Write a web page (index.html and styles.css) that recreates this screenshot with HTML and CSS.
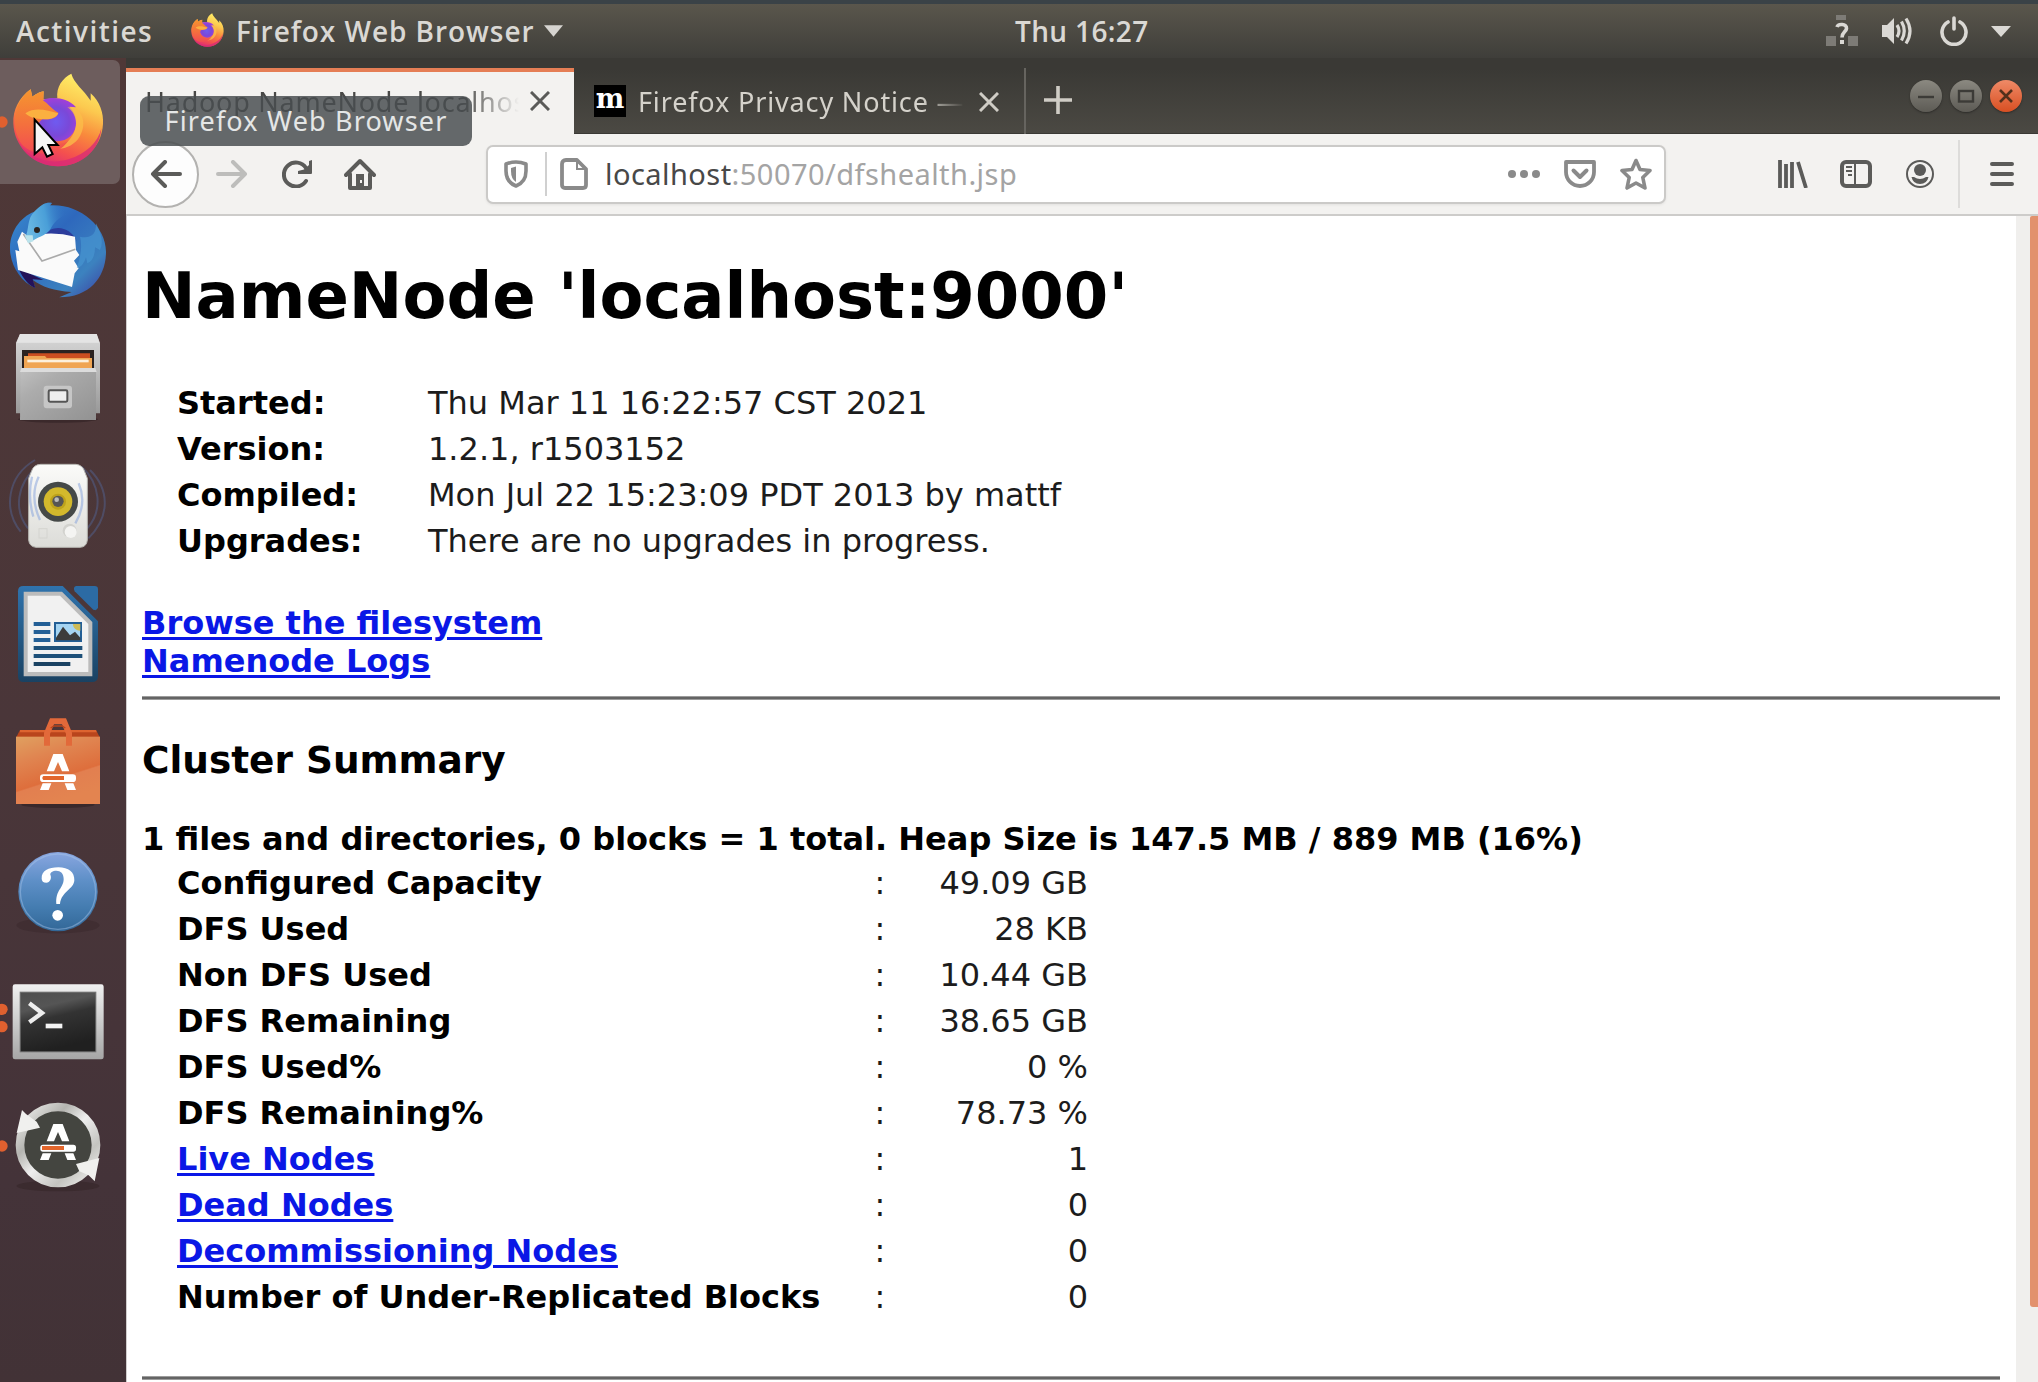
FILE: index.html
```html
<!DOCTYPE html>
<html lang="en">
<head>
<meta charset="utf-8">
<title>Hadoop NameNode localhost:9000</title>
<link rel="stylesheet" href="styles.css">
</head>
<body>
<svg class="defs" width="0" height="0" aria-hidden="true">
  <defs>
    <linearGradient id="fxBody" x1=".75" y1="0" x2=".35" y2="1"><stop offset="0" stop-color="#fff36b"/><stop offset=".3" stop-color="#fcc94f"/><stop offset=".55" stop-color="#f98a3c"/><stop offset=".8" stop-color="#f4504e"/><stop offset="1" stop-color="#dd2a78"/></linearGradient>
    <radialGradient id="fxGlobe" cx=".5" cy=".55" r=".55"><stop offset="0" stop-color="#6f5bf0"/><stop offset=".6" stop-color="#7a48d8"/><stop offset="1" stop-color="#a040d8"/></radialGradient>
    <linearGradient id="fxHead" x1="0" y1="0" x2="0" y2="1"><stop offset="0" stop-color="#f5962f"/><stop offset=".55" stop-color="#f4703d"/><stop offset="1" stop-color="#f24c52"/></linearGradient>
    <symbol id="firefox" viewBox="38 68 274 284">
      <path fill="url(#fxBody)" d="M172 145C168 110 188 84 214 71C222 100 250 118 272 152L272 130C300 155 311 190 309 222C305 295 245 349 174 349C100 349 42 290 40 220C39 180 55 145 92 118L97 140C108 134 112 128 131 124L130 148Z"/>
      <path fill="#d92c74" opacity=".8" d="M50 262C75 328 150 345 205 328C260 312 295 275 304 235C300 300 245 349 174 349C118 349 68 315 50 262Z"/>
      <path fill="url(#fxGlobe)" d="M128 150C160 138 205 145 228 172L208 170C234 195 236 235 212 258C185 284 135 277 118 240C100 205 105 170 128 150Z"/>
      <path fill="#fbbf4a" opacity=".75" d="M202 172C248 172 262 220 240 258C226 284 195 298 172 296C205 282 228 250 228 220C228 200 218 182 202 172Z"/>
      <path fill="url(#fxHead)" d="M92 118L97 140C108 134 112 128 131 124L130 152C142 158 158 180 175 188C172 205 148 210 128 207C108 218 110 245 125 262C145 286 185 287 205 272C170 325 90 320 60 275C30 225 45 150 92 118Z"/>
      <path fill="#fbb040" d="M76 190C105 170 140 180 175 190C168 206 145 210 122 207C102 206 90 202 76 190Z"/>
    </symbol>
    <linearGradient id="tbBlue" x1="0" y1="0" x2="1" y2="1"><stop offset="0" stop-color="#3a8fd0"/><stop offset=".4" stop-color="#2e68bd"/><stop offset=".75" stop-color="#3c82bf"/><stop offset="1" stop-color="#3d3aa0"/></linearGradient>
    <linearGradient id="tbHead" x1="0" y1=".6" x2="1" y2=".4"><stop offset="0" stop-color="#6dbbe4"/><stop offset=".5" stop-color="#4a9fd8"/><stop offset="1" stop-color="#2f6bbf" stop-opacity="0"/></linearGradient>
    <linearGradient id="grey" x1="0" y1="0" x2="0" y2="1"><stop offset="0" stop-color="#d8d8d8"/><stop offset="1" stop-color="#999"/></linearGradient>
    <linearGradient id="drawer" x1="0" y1="0" x2="1" y2="1"><stop offset="0" stop-color="#c0c0c0"/><stop offset=".3" stop-color="#acacac"/><stop offset="1" stop-color="#929292"/></linearGradient>
    <linearGradient id="white" x1="0" y1="0" x2="0" y2="1"><stop offset="0" stop-color="#fbfbf9"/><stop offset="1" stop-color="#dcdcd8"/></linearGradient>
    <linearGradient id="writer" x1="0" y1="0" x2="0" y2="1"><stop offset="0" stop-color="#2f73ad"/><stop offset="1" stop-color="#1a4262"/></linearGradient>
    <linearGradient id="bag" x1="0" y1="0" x2=".4" y2="1"><stop offset="0" stop-color="#e0a060"/><stop offset=".35" stop-color="#e08450"/><stop offset=".7" stop-color="#de6e3c"/><stop offset=".72" stop-color="#e27f50"/><stop offset="1" stop-color="#e38450"/></linearGradient>
    <linearGradient id="help" x1="0" y1="0" x2="0" y2="1"><stop offset="0" stop-color="#89a6e0"/><stop offset=".35" stop-color="#5f90c8"/><stop offset=".7" stop-color="#447cb0"/><stop offset="1" stop-color="#326797"/></linearGradient>
    <linearGradient id="term" x1="0" y1="0" x2=".3" y2="1"><stop offset="0" stop-color="#4e4e4e"/><stop offset=".3" stop-color="#555"/><stop offset=".5" stop-color="#333"/><stop offset="1" stop-color="#202020"/></linearGradient>
    <linearGradient id="frame" x1="0" y1="0" x2="0" y2="1"><stop offset="0" stop-color="#f0f0f0"/><stop offset=".5" stop-color="#ccc"/><stop offset="1" stop-color="#a6a6a6"/></linearGradient>
    <linearGradient id="ring" x1="0" y1="0" x2="1" y2="1"><stop offset="0" stop-color="#f2f2f0"/><stop offset=".3" stop-color="#b4b4b0"/><stop offset=".5" stop-color="#eee"/><stop offset=".75" stop-color="#c4c4c0"/><stop offset="1" stop-color="#f4f4f2"/></linearGradient>
  </defs>
</svg>

<header class="panel">
  <span class="panel-activities">Activities</span>
  <svg class="panel-fx" width="33" height="38"><use href="#firefox" width="33" height="38"/></svg>
  <span class="panel-app">Firefox Web Browser</span>
  <svg class="panel-caret" width="19" height="12" viewBox="0 0 20 12"><path fill="#d6d4d0" d="M0 0H20L10 12Z"/></svg>
  <span class="panel-clock">Thu 16:27</span>
  <div class="panel-status">
    <svg class="network" width="32" height="32" viewBox="0 0 32 32"><path fill="#7d7b76" d="M10 0h10v5H10zM0 21h10v10H0zM22 21h10v10H22z"/><path fill="none" stroke="#dad8d4" stroke-width="3.600" d="M11 12C12 8.500 21 8.500 20.500 13.500C20.200 17 16 17 16 22.500"/><rect x="14" y="25" width="4" height="4" fill="#dad8d4"/></svg>
    <svg class="volume" width="32" height="28" viewBox="0 0 32 28"><path fill="#dad8d4" d="M0 8H5L12 1V27L5 20H0Z"/><path fill="none" stroke="#dad8d4" stroke-width="3.200" d="M15 8Q19 14 15 20M19.500 4.500Q25 14 19.500 23.500M24 1.500Q32 14 24 26.500"/></svg>
    <svg class="power" width="28" height="30" viewBox="0 0 28 30"><path fill="none" stroke="#dad8d4" stroke-width="3.600" stroke-linecap="round" d="M8 6A12 12 0 1 0 20 6M14 2V13"/></svg>
    <svg width="20" height="11" viewBox="0 0 20 11"><path fill="#dad8d4" d="M0 0H20L10 11Z"/></svg>
  </div>
</header>

<div class="desktop">
  <nav class="dock">
    <div class="dock-item active">
      <svg class="icon" viewBox="0 24 378 384">
        <circle cx="6" cy="216" r="17" fill="#e0602f"/>
        <use href="#firefox" x="38" y="68" width="274" height="284"/>
        <path d="M104 209V312L127 292L141 320L158 312L145 285H173Z" fill="#f6f6f6" stroke="#000" stroke-width="6"/>
      </svg>
    </div>
    <div class="dock-item">
      <svg class="icon" viewBox="0 408 378 384">
        <path fill="url(#tbBlue)" d="M112 482C125 462 140 456 156 459L150 466C235 460 318 525 318 605C318 680 270 742 178 742L215 726C160 722 130 712 98 690L106 714C60 695 28 640 30 590C32 540 65 495 112 482Z"/>
        <path fill="#241259" d="M55 655C70 690 90 708 106 714L98 688L130 690Z"/>
        <path fill="#2c3c9c" d="M125 555C165 520 210 530 232 575L225 565C200 552 160 550 125 555Z"/>
        <path fill="#fafafa" d="M66 545L86 560L118 553Q170 546 225 560L228 600L238 615L222 632L236 655L224 670L216 711L54 660L46 600L58 604L52 575Z"/>
        <path fill="none" stroke="#aaa" stroke-width="5" d="M70 552L126 633L226 598"/>
        <path fill="url(#tbHead)" d="M76 562C88 540 80 506 104 484C124 462 140 456 156 459L150 467C185 468 200 480 205 492C175 500 160 520 150 540C135 558 110 562 96 574Z"/>
        <path fill="#b9e3ec" d="M74 556L98 556L100 574L84 580Z"/>
        <circle cx="111" cy="540" r="9" fill="#2a2420"/>
        <path fill="#4a9ad4" opacity=".6" d="M240 560Q290 570 288 520Q315 570 300 600L285 592Q285 630 262 640L258 622Q250 650 230 655Q250 600 240 560Z"/>
      </svg>
    </div>
    <div class="dock-item">
      <svg class="icon" viewBox="0 12 378 384">
        <ellipse cx="174" cy="328" rx="120" ry="10" fill="#2a1c1e" opacity=".5"/>
        <path fill="url(#grey)" d="M60 72H290L300 98V310H48V98Z"/>
        <path fill="#e4e4e4" d="M60 72H290L298 98H50Z"/>
        <rect x="66" y="120" width="216" height="62" fill="#2b2220"/>
        <path fill="#cc4e20" d="M84 130H270V160H84Z"/><path fill="#f0a553" d="M72 138H135L140 144H276V182H72Z"/>
        <rect x="82" y="149" width="184" height="8" fill="#fdf0dc"/>
        <path fill="url(#drawer)" d="M62 178H288V330H60Z"/><path fill="#dcdcdc" d="M64 174H286L290 186H60Z"/>
        <rect x="131" y="227" width="85" height="68" rx="9" fill="#c6c6c6"/>
        <rect x="146" y="241" width="56" height="34" rx="4" fill="#eee" stroke="#555" stroke-width="6"/>
      </svg>
    </div>
    <div class="dock-item">
      <svg class="icon" viewBox="0 396 378 384">
        <g fill="none" stroke="#52618f" stroke-width="6" opacity=".5"><path d="M105 450C20 500 10 600 62 665M112 470C50 520 40 600 84 655M245 470C300 520 310 600 262 655M270 480C330 540 330 620 265 685"/></g>
        <path fill="url(#white)" stroke="#b7b7b2" stroke-width="3" d="M122 463H228Q248 465 254 485L262 505V690Q260 711 240 712H108Q88 710 86 690V505L94 485Q100 464 122 463Z"/>
        <path fill="none" stroke="#8aa5dd" stroke-width="7" opacity=".55" d="M96 500Q82 560 100 620M116 500Q88 560 120 630M236 520Q262 580 226 640"/>
        <circle cx="174" cy="575" r="60" fill="#454948"/><circle cx="174" cy="575" r="43" fill="#d3b92c"/><circle cx="174" cy="575" r="24" fill="#bda21c"/><circle cx="174" cy="574" r="17" fill="#555"/><circle cx="170" cy="569" r="7" fill="#bbb"/>
        <circle cx="209" cy="662" r="21" fill="#d2d2ce"/><circle cx="212" cy="666" r="18" fill="#f4f4f2"/>
        <rect x="117" y="656" width="24" height="28" fill="none" stroke="#d4d4d0" stroke-width="3"/>
      </svg>
    </div>
    <div class="dock-item">
      <svg class="icon" viewBox="0 0 378 384">
        <path fill="url(#writer)" d="M70 48H188L294 154V318Q294 336 276 336H70Q54 336 54 318V64Q54 48 70 48Z"/>
        <path fill="#2c6ba4" d="M228 48H284Q294 48 294 58V112Q292 124 280 119L224 64Q218 52 228 48Z"/>
        <path fill="#bcbcbc" d="M71 65H186L277 156V319H71Z"/>
        <path fill="#f1f1f1" d="M83 77H180L265 162V306H83Z"/>
        <path fill="#235f96" d="M101 156H151V168H101zM101 180H151V192H101zM101 204H151V216H101z"/>
        <path fill="#1d5079" d="M101 228H247V240H101zM101 252H247V264H101z"/><path fill="#1a4262" d="M101 276H211V288H101z"/>
        <rect x="165" y="159" width="78" height="54" fill="#a5d4f2" stroke="#235f96" stroke-width="6"/>
        <path fill="#cdbb57" d="M219 162H241V182C228 182 219 174 219 162Z"/>
        <path fill="#3c3c3c" d="M168 203L189 170L210 196L225 185L241 203V211H168Z"/>
      </svg>
    </div>
    <div class="dock-item">
      <svg class="icon" viewBox="0 384 378 384">
        <ellipse cx="174" cy="704" rx="110" ry="10" fill="#2a1c1e" opacity=".5"/>
        <path fill="#b9451c" d="M60 480H288L300 503H48Z"/><path fill="#dd6430" d="M60 480H288L290 487H60Z"/>
        <rect x="48" y="500" width="252" height="202" fill="url(#bag)"/>
        <path fill="none" stroke="#e2693a" stroke-width="18" d="M141 527V490L156 454H192L207 490V527"/>
        <path fill="none" stroke="#b9451c" stroke-width="4" d="M152 474L162 468H186L196 474"/>
        <path fill="#fff" d="M160 552H188L208 604H186L174 576L162 604H140ZM128 640H154L146 660H120ZM194 640H220L228 660H202Z"/>
        <rect x="120" y="613" width="108" height="23" rx="10" fill="#fff"/><path fill="#e2662c" d="M130 618H192V630H130Q124 624 130 618Z"/>
      </svg>
    </div>
    <div class="dock-item">
      <svg class="icon" viewBox="0 -12 378 384">
        <ellipse cx="174" cy="286" rx="125" ry="24" fill="#2a1c1e" opacity=".25"/>
        <circle cx="174" cy="185" r="119" fill="url(#help)"/><circle cx="174" cy="185" r="113" fill="none" stroke="#a8c6ea" stroke-width="4" opacity=".45"/>
        <path fill="#fff" d="M125 146C124 122 145 112 175 112C206 112 224 127 223 151C222 178 184 184 180 222H169C166 180 190 176 191 148C191 130 182 122 169 122C158 122 150 127 151 134C156 144 150 158 139 158C130 158 125 153 125 146Z"/>
        <circle cx="173" cy="256" r="16" fill="#fff"/>
      </svg>
    </div>
    <div class="dock-item">
      <svg class="icon" viewBox="0 372 378 384">
        <circle cx="6" cy="538" r="17" fill="#e0602f"/><circle cx="6" cy="590" r="17" fill="#e0602f"/>
        <rect x="38" y="463" width="273" height="225" rx="7" fill="url(#frame)"/>
        <rect x="59" y="485" width="230" height="182" fill="#777"/><rect x="62" y="488" width="224" height="176" fill="url(#term)"/>
        <path fill="none" stroke="#eee" stroke-width="13" d="M88 520L126 549L88 577"/><rect x="137" y="581" width="50" height="14" fill="#f4f4f4"/>
      </svg>
    </div>
    <div class="dock-item">
      <svg class="icon" viewBox="0 6 378 384">
        <ellipse cx="174" cy="318" rx="125" ry="16" fill="#2a1c1e" opacity=".35"/>
        <circle cx="6" cy="198" r="17" fill="#e0602f"/>
        <circle cx="174" cy="195" r="114" fill="#444540" stroke="url(#ring)" stroke-width="26"/>
        <path fill="#f0f0ee" d="M66 90L78 102L110 125L120 143L50 159ZM298 234L284 304L266 286L238 274L228 252Z"/>
        <path fill="#fff" d="M160 132H188L208 184H186L174 156L162 184H140ZM128 220H154L146 240H120ZM194 220H220L228 240H202Z"/>
        <rect x="121" y="194" width="107" height="21" rx="8" fill="#fff"/><rect x="126" y="198" width="66" height="12" fill="#e2662c"/>
      </svg>
    </div>
  </nav>

  <div class="browser">
    <div class="tabstrip">
      <div class="tab selected">
        <span class="tab-title">Hadoop NameNode localhost</span>
        <svg class="tab-close" width="20" height="20" viewBox="0 0 20 20"><path stroke="#5a5a58" stroke-width="3" d="M1 1L19 19M19 1L1 19"/></svg>
      </div>
      <div class="tab background">
        <span class="favicon">m</span>
        <span class="tab-title">Firefox Privacy Notice —</span>
        <svg class="tab-close" width="20" height="20" viewBox="0 0 20 20"><path stroke="#cfccc5" stroke-width="3" d="M1 1L19 19M19 1L1 19"/></svg>
      </div>
      <svg class="new-tab" width="28" height="28" viewBox="0 0 28 28"><path stroke="#cfccc5" stroke-width="3.600" d="M0 14H28M14 0V28"/></svg>
      <div class="window-buttons">
        <span class="wb"><svg width="32" height="32"><path stroke="#3c3b37" stroke-width="2.400" d="M8 17H24"/></svg></span>
        <span class="wb"><svg width="32" height="32"><rect x="9" y="11" width="14" height="10.500" fill="none" stroke="#3c3b37" stroke-width="2.400"/></svg></span>
        <span class="wb close"><svg width="32" height="32"><path stroke="#53301b" stroke-width="2.600" d="M10 10L22 22M22 10L10 22"/></svg></span>
      </div>
    </div>

    <div class="toolbar">
      <span class="back"><svg width="32" height="28" viewBox="0 0 32 28"><path fill="none" stroke="#5b5b59" stroke-width="4" stroke-linecap="round" stroke-linejoin="round" d="M30 14H3M15 2L3 14L15 26"/></svg></span>
      <svg class="forward" width="32" height="28" viewBox="0 0 32 28"><path fill="none" stroke="#bdbdbb" stroke-width="4" stroke-linecap="round" stroke-linejoin="round" d="M2 14H29M17 2L29 14L17 26"/></svg>
      <svg class="reload" width="30" height="28" viewBox="0 0 30 28"><path fill="none" stroke="#5b5b59" stroke-width="4" stroke-linecap="round" d="M24 21A12 12 0 1 1 24 8"/><path fill="#5b5b59" d="M30 0V13Q30 14 29 14H16V11L22 9.500L27 5V1Z"/></svg>
      <svg class="home" width="32" height="32" viewBox="0 0 32 32"><path fill="none" stroke="#5b5b59" stroke-width="4" stroke-linecap="round" stroke-linejoin="round" d="M2 17L16 3L30 17M6 16V30H26V16"/><path fill="#5b5b59" d="M12 16H20V30H12Z"/><rect x="16" y="22" width="2" height="3" fill="#f3f2f0"/></svg>
      <div class="urlbar">
        <svg class="shield" width="24" height="28" viewBox="0 0 24 28"><path fill="none" stroke="#8a8a8a" stroke-width="3.600" stroke-linejoin="round" d="M2 4Q12 0 22 4V11Q22 22 12 26Q2 22 2 11Z"/><path fill="#8a8a8a" d="M7 8L12 6.500V22Q7 19 7 11Z"/></svg>
        <span class="url-rule"></span>
        <svg class="doc" width="28" height="32" viewBox="0 0 28 32"><path fill="none" stroke="#8a8a8a" stroke-width="3.800" stroke-linejoin="round" d="M6 2H17L26 11V27Q26 30 23 30H5Q2 30 2 27V6Q2 2 6 2Z"/><path fill="none" stroke="#8a8a8a" stroke-width="2" d="M17 2V11H26"/></svg>
        <span class="url"><span class="url-host">localhost</span><span class="url-path">:50070/dfshealth.jsp</span></span>
        <svg class="dots" width="32" height="8" viewBox="0 0 32 8"><g fill="#8a8a8a"><circle cx="4" cy="4" r="4"/><circle cx="16" cy="4" r="4"/><circle cx="28" cy="4" r="4"/></g></svg>
        <svg class="pocket" width="32" height="28" viewBox="0 0 32 28"><path fill="none" stroke="#8a8a8a" stroke-width="3.800" stroke-linejoin="round" d="M2 2H30V12A14 14 0 0 1 2 12Z"/><path fill="none" stroke="#8a8a8a" stroke-width="4" stroke-linecap="round" stroke-linejoin="round" d="M9.500 10.500L16 17L22.500 10.500"/></svg>
        <svg class="star" width="32" height="32" viewBox="0 0 32 32"><path fill="none" stroke="#8a8a8a" stroke-width="3.600" stroke-linejoin="round" d="M16 2.500L20 11.500L30 12.500L22.800 19.500L25 30L16 25L7 30L9.200 19.500L2 12.500L12 11.500Z"/></svg>
      </div>
      <svg class="library" width="30" height="28" viewBox="0 0 30 28"><path stroke="#5b5b59" stroke-width="3.800" d="M2 0V28M8 4V28M14 2V28M20 2L28 28"/></svg>
      <svg class="sidebar" width="32" height="28" viewBox="0 0 32 28"><rect x="2" y="2" width="28" height="24" rx="4" fill="none" stroke="#5b5b59" stroke-width="4"/><path stroke="#5b5b59" stroke-width="2" d="M15 2V26M6 7H12M6 11H12M8 15H12"/></svg>
      <svg class="account" width="28" height="28" viewBox="0 0 28 28"><circle cx="14" cy="14" r="13" fill="none" stroke="#5b5b59" stroke-width="2"/><circle cx="14" cy="10" r="6" fill="#5b5b59"/><path fill="#5b5b59" d="M5.500 17H8Q14 21 20 17H22.500Q21 24 14 24Q7 24 5.500 17Z"/></svg>
      <span class="tool-rule"></span>
      <svg class="menu" width="24" height="24" viewBox="0 0 24 24"><path stroke="#5b5b59" stroke-width="4" stroke-linecap="round" d="M2 2H22M2 12H22M2 22H22"/></svg>
    </div>

    <div class="viewport">
      <main class="page">
        <h1>NameNode 'localhost:9000'</h1>
        <table class="info">
          <tr><th>Started:</th><td>Thu Mar 11 16:22:57 CST 2021</td></tr>
          <tr><th>Version:</th><td>1.2.1, r1503152</td></tr>
          <tr><th>Compiled:</th><td>Mon Jul 22 15:23:09 PDT 2013 by mattf</td></tr>
          <tr><th>Upgrades:</th><td>There are no upgrades in progress.</td></tr>
        </table>
        <div class="links"><a href="#">Browse the filesystem</a><br><a href="#">Namenode Logs</a></div>
        <hr>
        <h3>Cluster Summary</h3>
        <p class="totals">1 files and directories, 0 blocks = 1 total. Heap Size is 147.5 MB / 889 MB (16%)</p>
        <table class="summary">
          <tr><th>Configured Capacity</th><td>:</td><td>49.09 GB</td></tr>
          <tr><th>DFS Used</th><td>:</td><td>28 KB</td></tr>
          <tr><th>Non DFS Used</th><td>:</td><td>10.44 GB</td></tr>
          <tr><th>DFS Remaining</th><td>:</td><td>38.65 GB</td></tr>
          <tr><th>DFS Used%</th><td>:</td><td>0 %</td></tr>
          <tr><th>DFS Remaining%</th><td>:</td><td>78.73 %</td></tr>
          <tr><th><a href="#">Live Nodes</a></th><td>:</td><td>1</td></tr>
          <tr><th><a href="#">Dead Nodes</a></th><td>:</td><td>0</td></tr>
          <tr><th><a href="#">Decommissioning Nodes</a></th><td>:</td><td>0</td></tr>
          <tr><th>Number of Under-Replicated Blocks</th><td>:</td><td>0</td></tr>
        </table>
        <hr class="last">
      </main>
      <div class="scrollbar"><div class="thumb"></div></div>
    </div>
  </div>
</div>
<div class="tooltip">Firefox Web Browser</div>
</body>
</html>
```
FILE: styles.css
```css
* { box-sizing: border-box; }
body { margin: 0; width: 2038px; height: 1382px; overflow: hidden; position: relative; background: #fff; font-family: "Noto Sans", "Open Sans", sans-serif; }
svg { display: block; flex: none; }
.defs { position: absolute; }
span { white-space: nowrap; }

/* Top panel */
.panel { height: 58px; border-top: 4px solid #3a4247; background: linear-gradient(#5a564c, #3f3e3a); display: flex; align-items: center; color: #dad8d4; font: 600 28px/36px "Open Sans", "Noto Sans", sans-serif; }
.panel span { height: 36px; }
.panel-activities { width: 175px; padding-left: 16px; letter-spacing: 1.45px; }
.panel-fx { margin-left: 16px; margin-bottom: 2px; }
.panel-app { width: 308px; margin-left: 12px; letter-spacing: .95px; }
.panel-clock { margin-left: 452px; width: 200px; letter-spacing: .35px; }
.panel-status { margin-left: auto; padding-right: 27px; display: flex; align-items: center; }
.network { margin-right: 24px; }
.volume { margin-right: 26px; }
.power { margin-right: 23px; }

.desktop { display: flex; height: 1324px; }

/* Dock */
.dock { width: 126px; flex: none; background: linear-gradient(#4f3837, #4a3639 50%, #443339 85%, #423236); }
.dock-item { height: 128px; position: relative; }
.dock-item.active::before { content: ""; position: absolute; left: 0; top: 2px; width: 120px; height: 124px; border-radius: 0 7px 7px 0; background: #6d5d5d; }
.icon { width: 126px; height: 128px; position: relative; }

/* Browser chrome */
.browser { flex: 1; min-width: 0; display: flex; flex-direction: column; }
.tabstrip { height: 76px; flex: none; background: linear-gradient(#3a3935 15%, #4b4943); border-bottom: 1px solid #3a3935; display: flex; padding-top: 10px; }
.tab { height: 66px; display: flex; align-items: center; font-size: 27px; }
.tab.selected { width: 448px; background: #f3f2f0; border-top: 4px solid #e57e55; color: #484846; padding: 0 24px 4px 19px; justify-content: space-between; }
.tab.selected .tab-title { width: 378px; overflow: hidden; letter-spacing: .75px; mask-image: linear-gradient(to right, #000 84%, transparent 99%); }
.tab.background { width: 452px; padding: 0 25px 0 20px; border-right: 2px solid #66645f; color: #d5d2cb; }
.favicon { width: 32px; height: 32px; background: #000; color: #fff; font: bold 27px/27px "DejaVu Serif", serif; text-align: center; display: block; }
.tab.background .tab-title { margin-left: 12px; width: 330px; overflow: hidden; letter-spacing: .85px; mask-image: linear-gradient(to right, #000 86%, transparent 99%); }
.tab.background .tab-close { margin-left: auto; margin-top: 2px; }
.new-tab { margin: 18px 0 0 18px; }
.window-buttons { margin-left: auto; padding: 12px 16px 0 0; display: flex; gap: 8px; }
.wb { width: 32px; height: 32px; border-radius: 50%; background: linear-gradient(#8b8981, #5d5b55); box-shadow: 0 1px 2px #2c2b28; }
.wb.close { background: linear-gradient(#ef8a67, #d84f22); }

.toolbar { height: 82px; flex: none; background: #f3f2f0; border-bottom: 2px solid #cdccca; display: flex; align-items: center; padding-left: 6px; }
.back { width: 67px; height: 67px; border: 2px solid #b3b2b0; border-radius: 50%; background: #fdfdfd; display: flex; align-items: center; justify-content: center; }
.forward { margin-left: 17px; }
.reload { margin-left: 34px; }
.home { margin-left: 32px; }
.urlbar { margin-left: 110px; width: 1180px; height: 59px; border: 2px solid #cbcac8; border-radius: 7px; background: #fff; display: flex; align-items: center; padding-left: 16px; box-shadow: 0 1px 3px #0001; }
.url-rule { width: 2px; height: 44px; background: #d0d0d0; margin-left: 17px; }
.doc { margin-left: 13px; }
.url { margin-left: 17px; width: 903px; font-size: 29px; line-height: 40px; letter-spacing: .45px; }
.url-host { color: #484848; }
.url-path { color: #a4a4a4; }
.pocket { margin-left: 24px; }
.star { margin-left: 24px; }
.library { margin-left: 112px; }
.sidebar { margin-left: 32px; }
.account { margin-left: 34px; }
.tool-rule { width: 2px; height: 68px; margin-left: 24px; background: #dddcda; }
.menu { margin-left: 30px; }

/* Page */
.viewport { flex: 1; min-height: 0; display: flex; }
.page { width: 1890px; padding: 42px 16px 0 15px; color: #000; font: 32px/38px "DejaVu Sans", sans-serif; overflow: hidden; border-left: 1px solid #d0cdcd; }
.page h1 { margin: 0; font-size: 64px; line-height: 76px; }
table { border-collapse: collapse; }
th, td { padding: 0; height: 46px; line-height: 46px; text-align: left; white-space: nowrap; }
td { color: #1c1c1c; }
.info { margin: 46px 0 0 35px; }
.info th { width: 251px; }
.links { margin-top: 40px; font-weight: bold; }
a { color: #0a17e6; text-decoration-thickness: 3px; text-underline-offset: 3px; }
hr { height: 4px; margin: 16px 0 0; border: 0; background: linear-gradient(#9c9c9c 1px, #646464 1px 3px, #9c9c9c 3px); }
h3 { margin: 38px 0 0; font-size: 37.440px; line-height: 44px; }
.totals { margin: 38px 0 0; font-weight: bold; white-space: nowrap; }
.summary { margin: 2px 0 0 35px; }
.summary th { width: 683px; }
.summary td:nth-child(2) { width: 40px; text-align: center; }
.summary td:nth-child(3) { width: 188px; text-align: right; }
.last { margin-top: 56px; }
.scrollbar { width: 22px; background: #f0efed; padding-left: 14px; }
.thumb { height: 1091px; background: #e2916d; border-radius: 2px 0 0 3px; }

.tooltip { position: absolute; left: 140px; top: 96px; width: 332px; height: 50px; border-radius: 9px; background: rgba(73, 78, 80, .84); color: #e4e6e6; font-size: 27px; line-height: 50px; text-align: center; letter-spacing: 1.15px; white-space: nowrap; }
```
